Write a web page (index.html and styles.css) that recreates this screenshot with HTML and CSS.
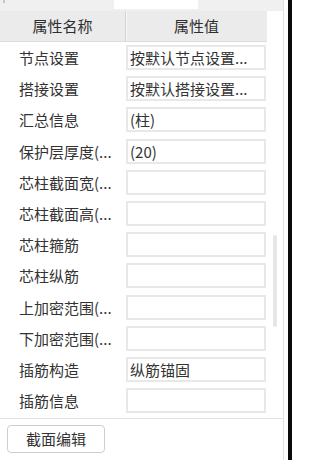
FILE: index.html
```html
<!DOCTYPE html>
<html lang="zh">
<head>
<meta charset="utf-8">
<link rel="stylesheet" href="styles.css">
</head>
<body>
<div class="frame">
  <div class="main">
    <div class="tabs"><span class="tabmark"></span><span class="tab"></span></div>
    <div class="panel">
      <div class="header">
        <div class="hcell">属性名称</div>
        <div class="hcell hval">属性值</div>
      </div>
      <div class="rows">
        <div class="row"><div class="label">节点设置</div><div class="value">按默认节点设置...</div></div>
        <div class="row"><div class="label">搭接设置</div><div class="value">按默认搭接设置...</div></div>
        <div class="row"><div class="label">汇总信息</div><div class="value">(柱)</div></div>
        <div class="row"><div class="label">保护层厚度(...</div><div class="value">(20)</div></div>
        <div class="row"><div class="label">芯柱截面宽(...</div><div class="value"></div></div>
        <div class="row"><div class="label">芯柱截面高(...</div><div class="value"></div></div>
        <div class="row"><div class="label">芯柱箍筋</div><div class="value"></div></div>
        <div class="row"><div class="label">芯柱纵筋</div><div class="value"></div></div>
        <div class="row"><div class="label">上加密范围(...</div><div class="value"></div></div>
        <div class="row"><div class="label">下加密范围(...</div><div class="value"></div></div>
        <div class="row"><div class="label">插筋构造</div><div class="value">纵筋锚固</div></div>
        <div class="row"><div class="label">插筋信息</div><div class="value"></div></div>
      </div>
      <div class="thumb"></div>
    </div>
    <div class="footer">
      <button class="btn">截面编辑</button>
    </div>
  </div>
  <div class="gap"></div>
  <div class="dark"></div>
</div>
</body>
</html>
```

FILE: styles.css
```css
html, body {
  margin: 0;
  padding: 0;
  background: #ffffff;
}
body {
  width: 292px;
  height: 460px;
  overflow: hidden;
  font-family: "Noto Sans CJK SC", "Noto Sans", sans-serif;
  font-size: 15px;
  color: #333333;
}
.frame {
  display: flex;
  width: 292px;
  height: 460px;
}
.main {
  width: 283px;
  border-right: 1px solid #e2e2e2;
  display: flex;
  flex-direction: column;
  background: #ffffff;
}
.gap {
  width: 4px;
  background: #ffffff;
}
.dark {
  width: 4px;
  background: #0a0a0a;
}
.tabs {
  height: 11px;
  background: #f0f0f0;
  display: flex;
  position: relative;
}
.tabmark {
  width: 2px;
  height: 3px;
  margin-left: 3px;
  background: #c8c8c8;
}
.tab {
  width: 84px;
  height: 9px;
  margin-left: 109px;
  background: #ffffff;
}
.panel {
  position: relative;
  height: 407px;
  overflow: hidden;
  border-bottom: 1px solid #e2e2e2;
  background: #ffffff;
}
.header {
  width: 267px;
  height: 30px;
  display: grid;
  grid-template-columns: 125px 142px;
  background: #ebebeb;
  border-bottom: 1px solid #dcdcdc;
}
.hcell {
  display: flex;
  align-items: center;
  justify-content: center;
  color: #2e2e2e;
  line-height: 30px;
}
.hval {
  border-left: 1px solid #d2d2d2;
  box-shadow: inset 1px 0 0 #f8f8f8;
}
.rows {
  padding-top: 3px;
}
.row {
  height: 31.2px;
  display: grid;
  grid-template-columns: 126px 140px;
  align-items: start;
}
.label {
  padding-left: 19px;
  height: 25px;
  line-height: 25px;
  white-space: nowrap;
  color: #333333;
}
.value {
  box-sizing: border-box;
  height: 25px;
  border: 2px solid #e8e8e8;
  padding-left: 2px;
  line-height: 21px;
  white-space: nowrap;
  overflow: hidden;
  color: #333333;
}
.thumb {
  position: absolute;
  left: 273px;
  top: 224px;
  width: 4px;
  height: 92px;
  border-radius: 2px;
  background: #e6e6e6;
}
.footer {
  flex: 1;
  padding: 6px 0 0 7px;
  background: #ffffff;
}
.btn {
  box-sizing: border-box;
  width: 98px;
  height: 28px;
  border: 1px solid #cdcdcd;
  border-radius: 4px;
  background: #ffffff;
  font-family: "Noto Sans CJK SC", "Noto Sans", sans-serif;
  font-size: 15px;
  color: #333333;
  padding: 0;
  line-height: 26px;
}
```
